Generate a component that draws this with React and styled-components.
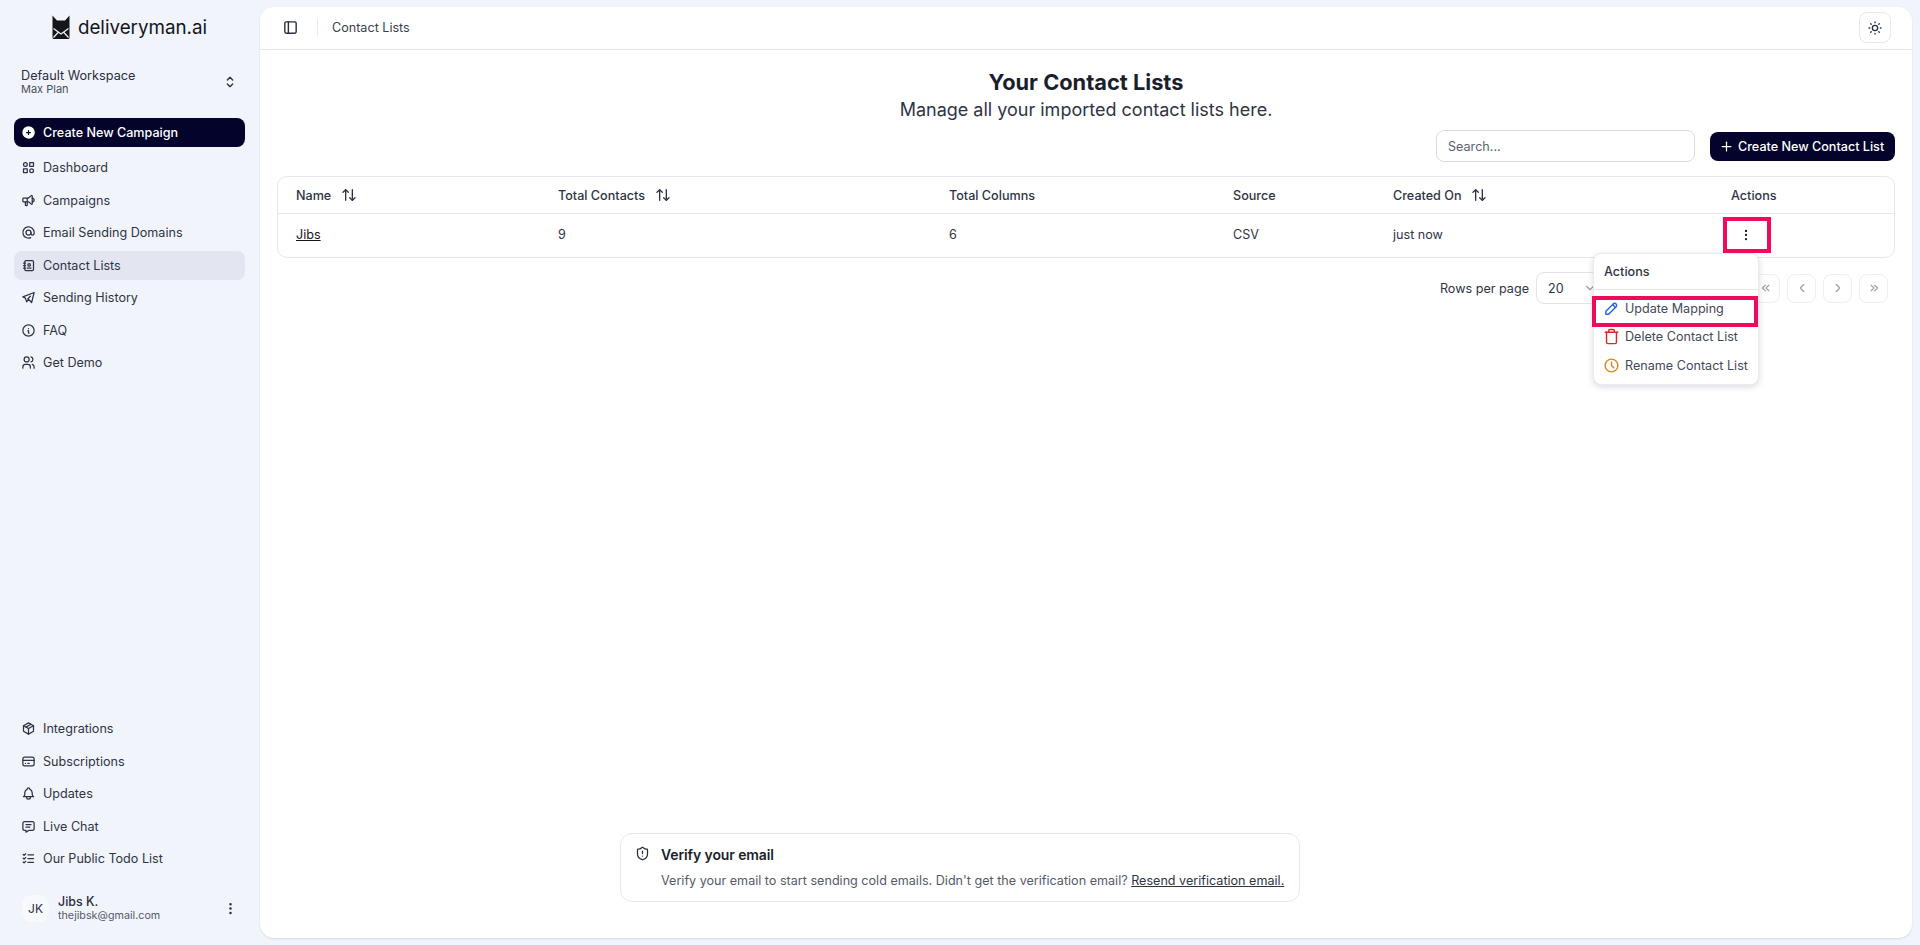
import React from "react";
import styled, { createGlobalStyle } from "styled-components";
import {
  TbCirclePlusFilled, TbCategory2, TbSpeakerphone, TbAt, TbAddressBook, TbBrandTelegram,
  TbInfoCircle, TbUsers, TbPackage, TbCreditCard, TbBell, TbMessage, TbListCheck,
  TbSelector, TbDotsVertical, TbLayoutSidebar, TbSun, TbPlus, TbChevronsLeft,
  TbChevronLeft, TbChevronRight, TbChevronsRight, TbChevronDown,
  TbPencil, TbClock,
} from "react-icons/tb";
import { ArrowUpDown, ShieldAlert, Trash } from "lucide-react";

const Global = createGlobalStyle`
  html, body { margin: 0; padding: 0; height: 100%; }
  body { font-family: Inter, "Liberation Sans", sans-serif; background: #f2f4fb; color: #1f2433; overflow: hidden; }
  * { box-sizing: border-box; }
`;

const Shell = styled.div`
  display: flex;
  height: 945px;
  width: 1920px;
`;
const Sidebar = styled.aside`
  width: 259px;
  flex: none;
  display: flex;
  flex-direction: column;
  padding: 0 14px;
`;
const Brand = styled.div`
  display: flex;
  align-items: center;
  justify-content: center;
  gap: 8px;
  height: 54px;
  font-size: 18.8px;
  color: #12141f;
`;
const Workspace = styled.div`
  display: flex;
  align-items: center;
  justify-content: space-between;
  padding: 0 7px 0 7px;
  height: 34px;
  margin-top: 10px;
  margin-bottom: 20px;
  svg { font-size: 16px; color: #2a2f3f; margin-top: 2px; }
`;
const WorkspaceName = styled.div`
  font-size: 12.7px;
  line-height: 15px;
  color: #2a2f3f;
`;
const WorkspacePlan = styled.div`
  font-size: 11px;
  line-height: 12px;
  color: #4a4f60;
`;
const NavList = styled.nav`
  display: flex;
  flex-direction: column;
  gap: 3.5px;
`;
const NavItem = styled.div`
  display: flex;
  align-items: center;
  gap: 7px;
  height: 29px;
  padding: 0 7px;
  margin-bottom: ${(p) => (p.$primary ? "2.5px" : "0")};
  border-radius: 8px;
  font-size: 12.6px;
  font-weight: ${(p) => (p.$primary ? 500 : 400)};
  color: ${(p) => (p.$primary ? "#ffffff" : "#2f3445")};
  background: ${(p) => (p.$primary ? "#04032b" : p.$active ? "#e3e6f0" : "transparent")};
  svg { font-size: 15px; flex: none; }
`;
const Spacer = styled.div`
  flex: 1;
`;
const UserRow = styled.div`
  display: flex;
  align-items: center;
  gap: 9px;
  margin: 21px 0 23px;
  padding: 0 7px 0 8px;
  height: 28px;
  > svg { font-size: 15px; margin-left: auto; color: #2a2f3f; }
`;
const Avatar = styled.div`
  width: 27px;
  height: 27px;
  border-radius: 9px;
  background: #f8f9fd;
  display: flex;
  align-items: center;
  justify-content: center;
  font-size: 12px;
  color: #2a2f3f;
`;
const UserName = styled.div`
  font-size: 12.4px;
  line-height: 15px;
  font-weight: 500;
  color: #2a2f3f;
`;
const UserMail = styled.div`
  font-size: 10.75px;
  line-height: 13px;
  color: #555a6b;
`;
const Main = styled.main`
  position: relative;
  flex: 1;
  margin: 7px 8px 7px 1px;
  background: #fff;
  border-radius: 14px;
  box-shadow: 0 1px 2px rgba(30, 35, 60, 0.12);
  display: flex;
  flex-direction: column;
`;
const Topbar = styled.header`
  display: flex;
  align-items: center;
  height: 43px;
  padding: 0 21px 1px 22px;
  border-bottom: 1px solid #e6e8ef;
  flex: none;
  font-size: 12.6px;
  color: #3a3f4f;
`;
const SidebarToggle = styled.span`
  display: flex;
  font-size: 17px;
  color: #2a2f3f;
  padding-right: 18px;
  margin-right: 14px;
  border-right: 1px solid #e6e8ef;
`;
const ThemeButton = styled.button`
  margin-left: auto;
  width: 32px;
  height: 31px;
  border: 1px solid #e6e8ef;
  border-radius: 8px;
  background: #fff;
  display: flex;
  align-items: center;
  justify-content: center;
  color: #2a2f3f;
  padding: 0;
  font-size: 16px;
`;
const Heading = styled.div`
  text-align: center;
  padding-top: 19px;
`;
const Title = styled.h1`
  margin: 0;
  font-size: 21.8px;
  line-height: 27px;
  font-weight: 700;
  color: #1b1e2c;
`;
const Subtitle = styled.p`
  margin: 0;
  font-size: 18px;
  line-height: 27px;
  color: #2f3445;
`;
const Tools = styled.div`
  display: flex;
  justify-content: flex-end;
  align-items: center;
  gap: 15px;
  padding: 0 17px 0 0;
  margin-top: 7px;
`;
const Search = styled.input`
  width: 259px;
  height: 32px;
  border: 1px solid #d9dce5;
  border-radius: 8px;
  padding: 0 11px;
  font: 12.6px Inter, sans-serif;
  color: #2a2f3f;
  outline: none;
  &::placeholder { color: #5c6170; }
`;
const PrimaryButton = styled.button`
  width: 185px;
  height: 29px;
  border: 0;
  border-radius: 8px;
  background: #04032b;
  color: #fff;
  display: flex;
  align-items: center;
  gap: 4px;
  padding: 0 0 0 9px;
  font: 500 12.6px Inter, sans-serif;
  white-space: nowrap;
  svg { font-size: 15px; flex: none; }
`;
const TableWrap = styled.div`
  margin: 14px 17px 0 17px;
  border: 1px solid #e6e8ef;
  border-radius: 10px;
  overflow: hidden;
`;
const Row = styled.div`
  display: grid;
  grid-template-columns: 262px 391px 284px 160px 338px 1fr;
  align-items: center;
  height: ${(p) => (p.$head ? "37px" : "43px")};
  padding-bottom: ${(p) => (p.$head ? "0" : "2px")};
  border-bottom: ${(p) => (p.$head ? "1px solid #e6e8ef" : "0")};
  font-size: 12.6px;
  color: #2f3445;
  font-weight: ${(p) => (p.$head ? 500 : 400)};
`;
const Cell = styled.div`
  display: flex;
  align-items: center;
  gap: 10px;
  padding-left: 18px;
`;
const NameLink = styled.a`
  color: #12141f;
  text-decoration: underline;
`;
const RowMenu = styled.span`
  display: flex;
  font-size: 14px;
  color: #1f2433;
  padding-left: 8px;
`;
const Pager = styled.div`
  display: flex;
  align-items: center;
  justify-content: flex-end;
  height: 32px;
  margin: 14px 24px 0 0;
  font-size: 12.6px;
  color: #2f3445;
`;
const PageSelect = styled.div`
  display: flex;
  align-items: center;
  justify-content: space-between;
  width: 72px;
  height: 32px;
  margin: 0 143px 0 7px;
  padding: 0 10px 0 11px;
  border: 1px solid #e2e4eb;
  border-radius: 8px;
  svg { color: #9a9eaa; font-size: 14px; }
`;
const PageButtons = styled.div`
  display: flex;
  gap: 7px;
`;
const PageButton = styled.span`
  display: flex;
  align-items: center;
  justify-content: center;
  width: 29px;
  height: 29px;
  border: 1px solid #eceef3;
  border-radius: 8px;
  color: #9a9eaa;
  font-size: 14px;
`;
const Highlight = styled.div`
  position: absolute;
  border: 4px solid #f00a5c;
  z-index: 3;
  pointer-events: none;
`;
const MenuHighlight = styled(Highlight)`
  left: 1332px;
  top: 289px;
  width: 166px;
  height: 31px;
`;
const ButtonHighlight = styled(Highlight)`
  left: 1463px;
  top: 210px;
  width: 48px;
  height: 36px;
`;
const Menu = styled.div`
  position: absolute;
  left: 1333px;
  top: 246px;
  width: 166px;
  height: 132px;
  background: #fff;
  border: 1px solid #e9ebf0;
  border-radius: 8px;
  box-shadow: 0 2px 6px rgba(30, 35, 60, 0.16);
  z-index: 2;
  font-size: 12.6px;
  color: #444958;
`;
const MenuLabel = styled.div`
  height: 36px;
  padding: 0 10px;
  display: flex;
  align-items: center;
  border-bottom: 1px solid #e6e8ef;
  color: #2f3445;
  font-weight: 500;
`;
const MenuItems = styled.div`
  padding-top: 4px;
`;
const MenuItem = styled.div`
  height: 28.5px;
  display: flex;
  align-items: center;
  gap: 5px;
  padding-left: 9px;
  svg { font-size: 17px; color: ${(p) => p.$tone}; flex: none; }
`;
const Notice = styled.div`
  position: absolute;
  left: 360px;
  top: 826px;
  width: 680px;
  height: 69px;
  border: 1px solid #e6e8ef;
  border-radius: 12px;
  background: #fff;
  display: grid;
  grid-template-columns: 26px 1fr;
  align-content: start;
  padding: 11px 14px;
  svg { font-size: 15px; color: #2a2f3f; margin-top: 1px; }
`;
const NoticeTitle = styled.div`
  font-size: 14px;
  line-height: 20px;
  font-weight: 600;
  color: #1b1e2c;
  letter-spacing: -0.1px;
`;
const NoticeBody = styled.div`
  grid-column: 2;
  margin-top: 7px;
  font-size: 12.6px;
  line-height: 18px;
  color: #555a6b;
  white-space: nowrap;
`;
const NoticeLink = styled.a`
  color: #2f3445;
  text-decoration: underline;
`;

const Logo = () => (
  <svg width="18" height="24" viewBox="0 0 18 24" aria-hidden="true">
    <path d="M0.5 0.5 L5 5.5 H13 L17.5 0.5 V22.5 Q17.5 24 16 24 H2 Q0.5 24 0.5 22.5 Z" fill="#15161c" />
    <path d="M1.5 13.5 L9 19 L16.5 13.5 M1.5 22.5 L6.5 17 M16.5 22.5 L11.5 17" fill="none" stroke="#f2f4fb" strokeWidth="1.2" />
  </svg>
);

const topNav = [
  [TbCategory2, "Dashboard"],
  [TbSpeakerphone, "Campaigns"],
  [TbAt, "Email Sending Domains"],
  [TbAddressBook, "Contact Lists", true],
  [TbBrandTelegram, "Sending History"],
  [TbInfoCircle, "FAQ"],
  [TbUsers, "Get Demo"],
];
const bottomNav = [
  [TbPackage, "Integrations"],
  [TbCreditCard, "Subscriptions"],
  [TbBell, "Updates"],
  [TbMessage, "Live Chat"],
  [TbListCheck, "Our Public Todo List"],
];

export default function App() {
  return (
    <Shell>
      <Global />
      <Sidebar>
        <Brand><Logo />deliveryman.ai</Brand>
        <Workspace>
          <div>
            <WorkspaceName>Default Workspace</WorkspaceName>
            <WorkspacePlan>Max Plan</WorkspacePlan>
          </div>
          <TbSelector />
        </Workspace>
        <NavList>
          <NavItem $primary><TbCirclePlusFilled />Create New Campaign</NavItem>
          {topNav.map(([Icon, label, active]) => (
            <NavItem key={label} $active={active}><Icon />{label}</NavItem>
          ))}
        </NavList>
        <Spacer />
        <NavList>
          {bottomNav.map(([Icon, label]) => (
            <NavItem key={label}><Icon />{label}</NavItem>
          ))}
        </NavList>
        <UserRow>
          <Avatar>JK</Avatar>
          <div>
            <UserName>Jibs K.</UserName>
            <UserMail>thejibsk@gmail.com</UserMail>
          </div>
          <TbDotsVertical />
        </UserRow>
      </Sidebar>
      <Main>
        <Topbar>
          <SidebarToggle><TbLayoutSidebar /></SidebarToggle>
          Contact Lists
          <ThemeButton aria-label="Theme"><TbSun /></ThemeButton>
        </Topbar>
        <Heading>
          <Title>Your Contact Lists</Title>
          <Subtitle>Manage all your imported contact lists here.</Subtitle>
        </Heading>
        <Tools>
          <Search placeholder="Search..." />
          <PrimaryButton><TbPlus />Create New Contact List</PrimaryButton>
        </Tools>
        <TableWrap>
          <Row $head>
            <Cell>Name <ArrowUpDown size={16} /></Cell>
            <Cell>Total Contacts <ArrowUpDown size={16} /></Cell>
            <Cell>Total Columns</Cell>
            <Cell>Source</Cell>
            <Cell>Created On <ArrowUpDown size={16} /></Cell>
            <Cell>Actions</Cell>
          </Row>
          <Row>
            <Cell><NameLink>Jibs</NameLink></Cell>
            <Cell>9</Cell>
            <Cell>6</Cell>
            <Cell>CSV</Cell>
            <Cell>just now</Cell>
            <Cell><RowMenu><TbDotsVertical /></RowMenu></Cell>
          </Row>
        </TableWrap>
        <Pager>
          Rows per page
          <PageSelect>20 <TbChevronDown /></PageSelect>
          <PageButtons>
            <PageButton><TbChevronsLeft /></PageButton>
            <PageButton><TbChevronLeft /></PageButton>
            <PageButton><TbChevronRight /></PageButton>
            <PageButton><TbChevronsRight /></PageButton>
          </PageButtons>
        </Pager>
        <ButtonHighlight />
        <Menu>
          <MenuLabel>Actions</MenuLabel>
          <MenuItems>
            <MenuItem $tone="#2563eb"><TbPencil />Update Mapping</MenuItem>
            <MenuItem $tone="#dc2626"><Trash size={17} />Delete Contact List</MenuItem>
            <MenuItem $tone="#d98a1f"><TbClock />Rename Contact List</MenuItem>
          </MenuItems>
        </Menu>
        <MenuHighlight />
        <Notice>
          <ShieldAlert size={15} />
          <NoticeTitle>Verify your email</NoticeTitle>
          <NoticeBody>
            Verify your email to start sending cold emails. Didn't get the verification email? <NoticeLink>Resend verification email.</NoticeLink>
          </NoticeBody>
        </Notice>
      </Main>
    </Shell>
  );
}
